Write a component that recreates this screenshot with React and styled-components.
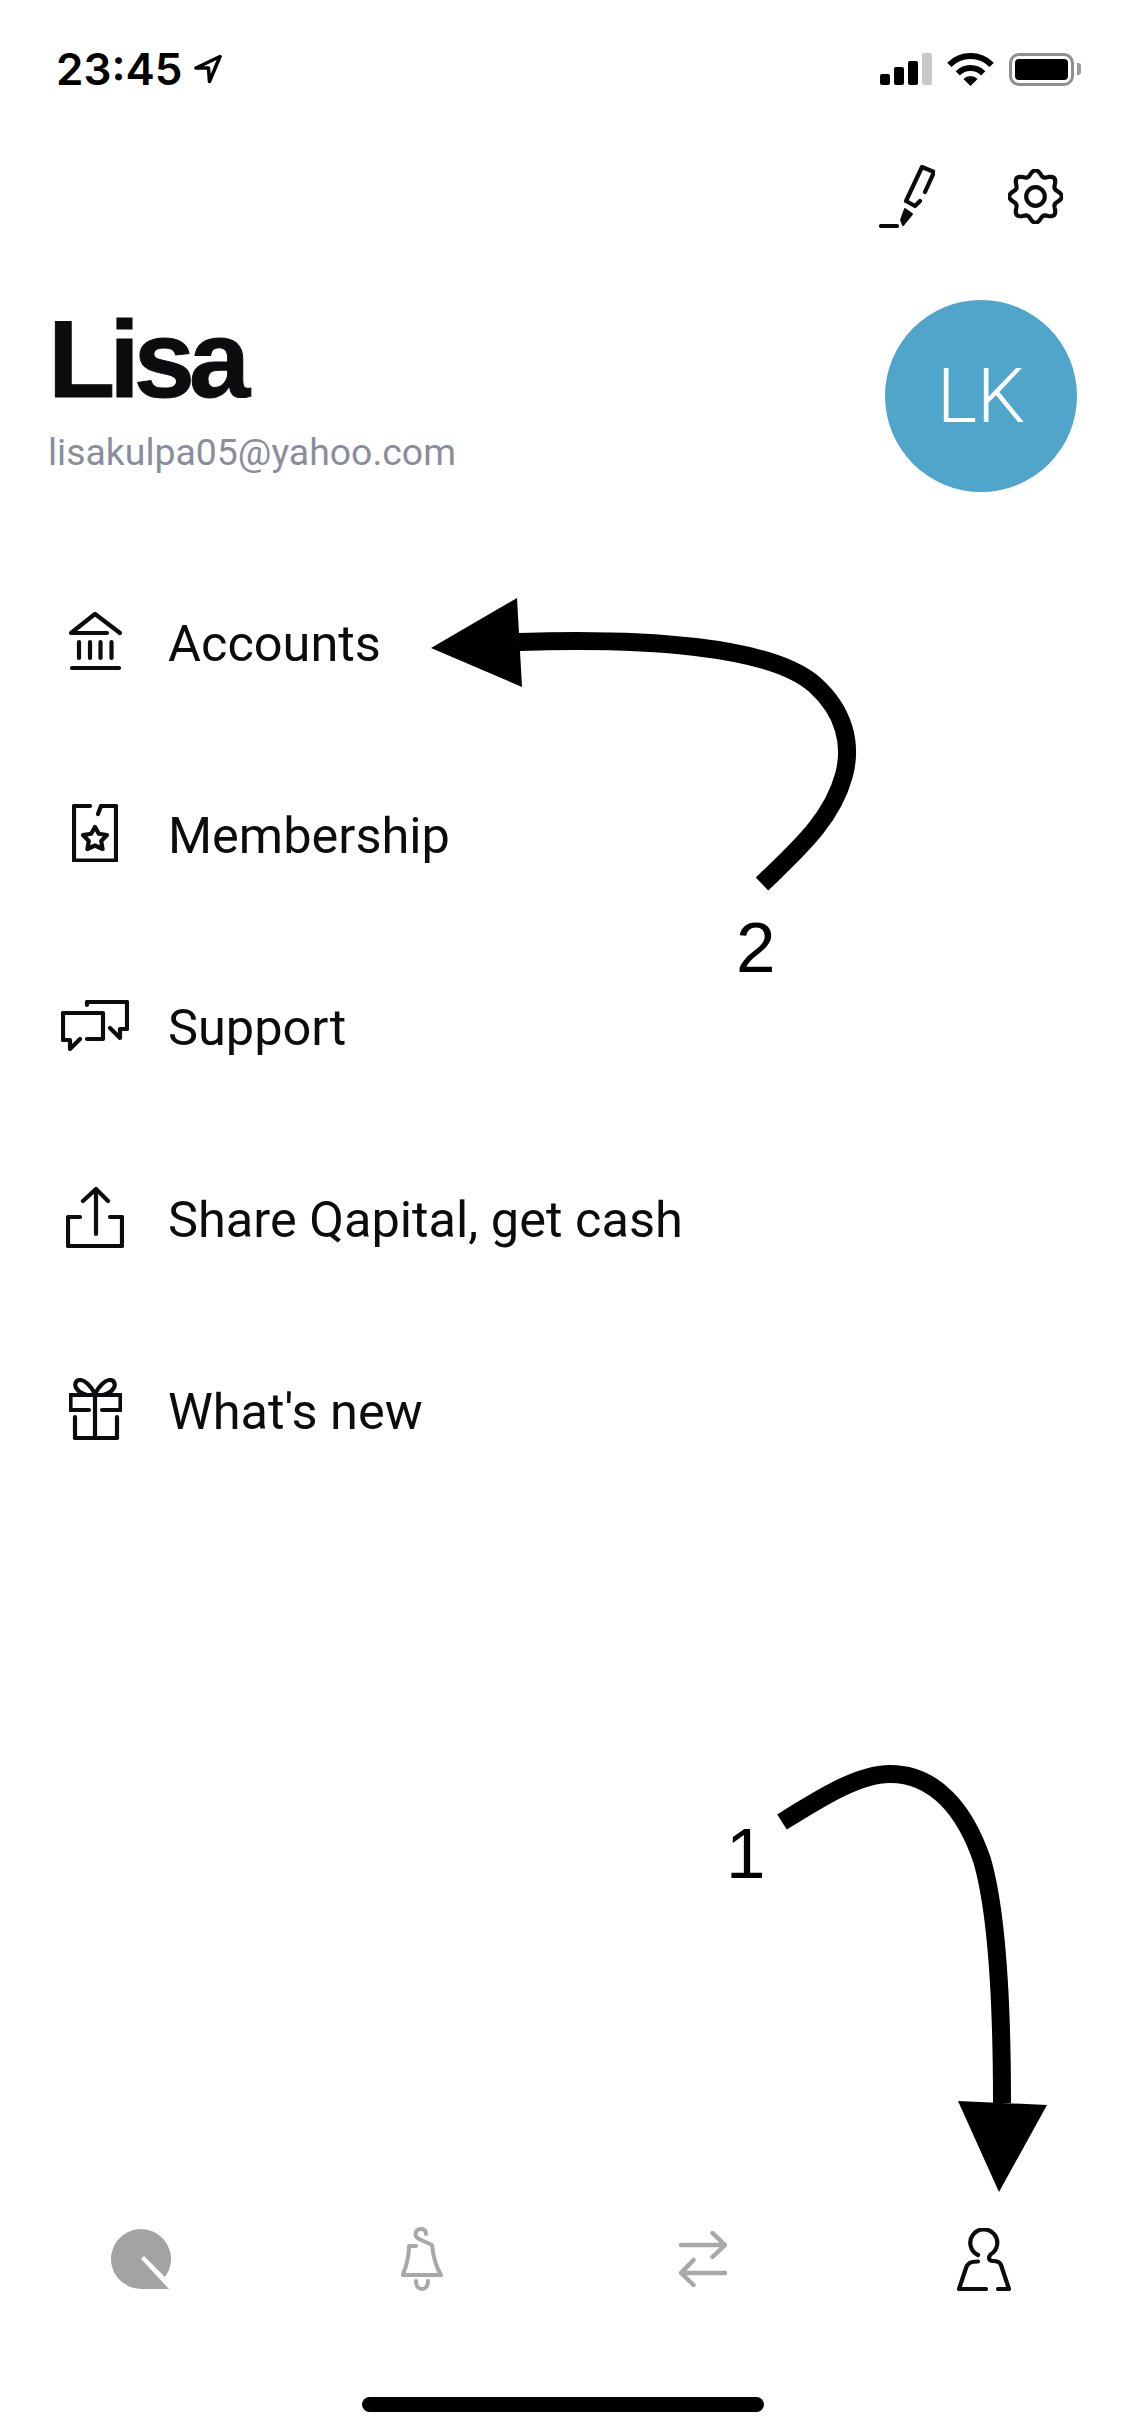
import React from 'react';
import styled, {createGlobalStyle} from 'styled-components';

const GlobalStyle = createGlobalStyle`
    html, body {
        margin: 0;
        padding: 0;
        background: #fff;
    }
`;

const Page = styled.div`
    position: relative;
    display: flex;
    flex-direction: column;
    width: 1125px;
    height: 2436px;
    overflow: hidden;
    background: #fff;
    color: #0c0c0e;
    font-family: "Liberation Sans", Arial, sans-serif;
`;

const StatusBar = styled.div`
    display: flex;
    align-items: center;
    justify-content: space-between;
    height: 138px;
    padding: 0 44px 0 56px;
    box-sizing: border-box;
`;

const StatusLeft = styled.div`
    display: flex;
    align-items: center;
    gap: 12px;
`;

const Time = styled.span`
    font-family: Inter, sans-serif;
    font-size: 44px;
    font-weight: 600;
    line-height: 44px;
    color: #000;
`;

const StatusRight = styled.div`
    display: flex;
    align-items: center;
    gap: 15px;
`;

const Signal = styled.div`
    display: flex;
    align-items: flex-end;
    gap: 4px;
    height: 32px;
`;

const SignalBar = styled.div`
    width: 10px;
    height: ${p => p.$h}px;
    border-radius: 2px;
    background: ${p => (p.$off ? '#c8c8c8' : '#000')};
`;

const Battery = styled.div`
    display: flex;
    align-items: center;
    gap: 3px;
`;

const BatteryShell = styled.div`
    width: 65px;
    height: 33px;
    padding: 3px;
    box-sizing: border-box;
    border: 3px solid #8f8f8f;
    border-radius: 10px;
`;

const BatteryFill = styled.div`
    width: 100%;
    height: 100%;
    border-radius: 4px;
    background: #000;
`;

const BatteryNub = styled.div`
    width: 4px;
    height: 12px;
    border-radius: 0 3px 3px 0;
    background: #9a9a9a;
`;

const ActionBar = styled.div`
    display: flex;
    align-items: center;
    justify-content: flex-end;
    gap: 73px;
    height: 62px;
    margin-top: 27px;
    padding-right: 62px;
`;

const Header = styled.div`
    display: flex;
    justify-content: space-between;
    margin-top: 73px;
    padding: 0 48px 0 48px;
`;

const Identity = styled.div`
    padding-top: 4px;
`;

const Name = styled.h1`
    margin: 0;
    font-family: "Liberation Sans", Arial, sans-serif;
    font-size: 110px;
    font-weight: 700;
    line-height: 110px;
    letter-spacing: -6px;
    -webkit-text-stroke: 1px #0c0c0e;
`;

const Email = styled.div`
    margin-top: 17px;
    font-family: Roboto, sans-serif;
    font-size: 37.4px;
    line-height: 42px;
    color: #8a8e9c;
`;

const Avatar = styled.div`
    display: flex;
    align-items: center;
    justify-content: center;
    width: 192px;
    height: 192px;
    border-radius: 50%;
    background: #50a5cb;
    color: #fff;
    font-family: Roboto, sans-serif;
    font-size: 76px;
    font-weight: 300;
`;

const Menu = styled.div`
    display: flex;
    flex-direction: column;
    margin-top: 53px;
`;

const Row = styled.div`
    display: flex;
    align-items: center;
    height: 192px;
    padding-left: 45px;
`;

const IconSlot = styled.div`
    display: flex;
    align-items: center;
    justify-content: center;
    width: 100px;
    margin-right: 23px;
`;

const RowLabel = styled.span`
    position: relative;
    top: 3px;
    font-family: Roboto, sans-serif;
    font-size: 50.5px;
    line-height: 60px;
`;

const Spacer = styled.div`
    flex: 1;
`;

const TabBar = styled.div`
    display: grid;
    grid-template-columns: repeat(4, 1fr);
    height: 64px;
    margin-bottom: 106px;
`;

const Tab = styled.div`
    display: flex;
    align-items: center;
    justify-content: center;
`;

const HomeBar = styled.div`
    width: 402px;
    height: 15px;
    margin: 0 auto 24px;
    border-radius: 8px;
    background: #000;
`;

const Overlay = styled.svg`
    position: absolute;
    top: 0;
    left: 0;
    pointer-events: none;
`;

const Callout = styled.span`
    position: absolute;
    left: ${p => p.$x}px;
    top: ${p => p.$y}px;
    font-size: 71px;
    line-height: 80px;
    color: #000;
`;

const Line = ({w, h, color = '#0c0c0e', sw = 4.2, children}) => (
    <svg width={w} height={h} viewBox={`0 0 ${w} ${h}`} fill="none" stroke={color} strokeWidth={sw} strokeLinecap="round" strokeLinejoin="round">
        {children}
    </svg>
);

const gearPath = () => {
    const pts = [];
    for (let i = 0; i < 96; i++) {
        const a = (i / 96) * Math.PI * 2;
        const r = 23.5 + 2.8 * Math.cos(8 * a);
        pts.push(`${(27.5 + r * Math.sin(a)).toFixed(2)} ${(27.5 - r * Math.cos(a)).toFixed(2)}`);
    }
    return `M${pts.join('L')}Z`;
};

const LocationIcon = () => (
    <Line w={28} h={30} color="#000" sw={3.5}>
        <path d="M26 2.500L2 14H14.500L15.500 27.500Z" />
    </Line>
);

const WifiIcon = () => (
    <svg width="47" height="33" viewBox="0 0 47 33" fill="none">
        <path d="M2.300 11.800A30 30 0 0 1 44.700 11.800" stroke="#000" strokeWidth="6" />
        <path d="M10.800 20.300A18 18 0 0 1 36.200 20.300" stroke="#000" strokeWidth="6" />
        <path d="M23.500 33L16.400 25.900A10 10 0 0 1 30.600 25.900Z" fill="#000" />
    </svg>
);

const PenIcon = () => (
    <Line w={56} h={63}>
        <path d="M46 27L55 7L43 2L27 36L36 41L41 36" />
        <path d="M26 44L33 49L24 60L22 55Z" fill="#0c0c0e" strokeWidth="2" />
        <path d="M2 61H18" />
    </Line>
);

const GearIcon = () => (
    <Line w={55} h={55}>
        <path d={gearPath()} />
        <circle cx="27.500" cy="27.500" r="9.300" />
    </Line>
);

const BankIcon = () => (
    <Line w={53} h={58}>
        <path d="M38 21H2L26 2L51 21" />
        <path d="M10 30V46M21 30V46M31.500 30V46M42.500 30V46" />
        <path d="M3 56H50" />
    </Line>
);

const MembershipIcon = () => (
    <Line w={46} h={58}>
        <path d="M18 2H2V56.500H44V2H29L26 10" />
        <path d="M23 23L26.800 29.700L35 31L29.200 37L30.600 45L23 41.500L15.400 45L16.800 37L11 31L19.200 29.700Z" />
    </Line>
);

const SupportIcon = () => (
    <Line w={68} h={51}>
        <path d="M26 5V2H66V29H59V38L49 28" />
        <path d="M19 39L9 49V40H2V13H42V39H26" />
    </Line>
);

const ShareIcon = () => (
    <Line w={58} h={61}>
        <path d="M30 47V2M17 14L30 2L42 14" />
        <path d="M14 30H2V59H56V30H44" />
    </Line>
);

const GiftIcon = () => (
    <Line w={53} h={62}>
        <path d="M20 32H1.500V17H51.500V32H33" />
        <path d="M6 39V60H48V39" />
        <path d="M26 17V60" />
        <path d="M26 16C22 8 16 2 11 2C6 2 5 8 8 11C10 14 14 16 18 17" />
        <path d="M26 16C30 8 36 2 41 2C46 2 47 8 44 11C42 14 38 16 34 17" />
    </Line>
);

const QIcon = () => (
    <svg width="60" height="60" viewBox="0 0 60 60">
        <path d="M30 60A30 30 0 1 1 54 48L33 27L30 30L58 60Z" fill="#a3a3a3" />
    </svg>
);

const BellIcon = () => (
    <Line w={42} h={64} color="#a8a8a8" sw={4}>
        <path d="M25 7C25 3 22.500 2 20 2C16.500 2 14.500 4 14.500 7C14.500 9.500 16 11 18 12L31 18C32 28 34 38 40 48H1.800C5 40 8 32 8 19H15" />
        <path d="M15 54C15 60 18 62 21 62C24 62 27 60 27 54" />
    </Line>
);

const TransferIcon = () => (
    <Line w={48} h={56} color="#a8a8a8" sw={4.500}>
        <path d="M2 14H46M33.500 2L46 14L33.500 26" />
        <path d="M46 42H2M14.500 29L2 42L14.500 54" />
    </Line>
);

const PersonIcon = () => (
    <Line w={54} h={63}>
        <path d="M21 27A13.500 13.500 0 1 1 33.500 26.500C31.500 29 31 33 36 33C40 33 43 34 44 37L52 61H41" />
        <path d="M29 61H2L9 40C10.500 35.500 13 33.500 21 33.500" />
    </Line>
);

const menu = [
    {label: 'Accounts', Icon: BankIcon},
    {label: 'Membership', Icon: MembershipIcon},
    {label: 'Support', Icon: SupportIcon},
    {label: 'Share Qapital, get cash', Icon: ShareIcon},
    {label: "What's new", Icon: GiftIcon}
];

const App = () => (
    <Page>
        <GlobalStyle />
        <StatusBar>
            <StatusLeft>
                <Time>23:45</Time>
                <LocationIcon />
            </StatusLeft>
            <StatusRight>
                <Signal>
                    <SignalBar $h={11} />
                    <SignalBar $h={18} />
                    <SignalBar $h={24} />
                    <SignalBar $h={32} $off />
                </Signal>
                <WifiIcon />
                <Battery>
                    <BatteryShell>
                        <BatteryFill />
                    </BatteryShell>
                    <BatteryNub />
                </Battery>
            </StatusRight>
        </StatusBar>
        <ActionBar>
            <PenIcon />
            <GearIcon />
        </ActionBar>
        <Header>
            <Identity>
                <Name>Lisa</Name>
                <Email>lisakulpa05@yahoo.com</Email>
            </Identity>
            <Avatar>LK</Avatar>
        </Header>
        <Menu>
            {menu.map(({label, Icon}) => (
                <Row key={label}>
                    <IconSlot><Icon /></IconSlot>
                    <RowLabel>{label}</RowLabel>
                </Row>
            ))}
        </Menu>
        <Spacer />
        <TabBar>
            <Tab><QIcon /></Tab>
            <Tab><BellIcon /></Tab>
            <Tab><TransferIcon /></Tab>
            <Tab><PersonIcon /></Tab>
        </TabBar>
        <HomeBar />
        <Overlay width="1125" height="2436" viewBox="0 0 1125 2436" fill="none">
            <path d="M519 642C640 638 770 645 815 685C845 712 852 745 844 775C832 820 797 850 762 884" stroke="#000" strokeWidth="18" />
            <path d="M431 648L517 598L522 687Z" fill="#000" />
            <path d="M782 1822C825 1795 860 1774 890 1774C935 1774 965 1810 982 1860C998 1915 1002 2010 1002 2103" stroke="#000" strokeWidth="18" />
            <path d="M958 2101L1047 2105L999 2192Z" fill="#000" />
        </Overlay>
        <Callout $x={736} $y={908}>2</Callout>
        <Callout $x={726} $y={1814}>1</Callout>
    </Page>
);

export default App;
